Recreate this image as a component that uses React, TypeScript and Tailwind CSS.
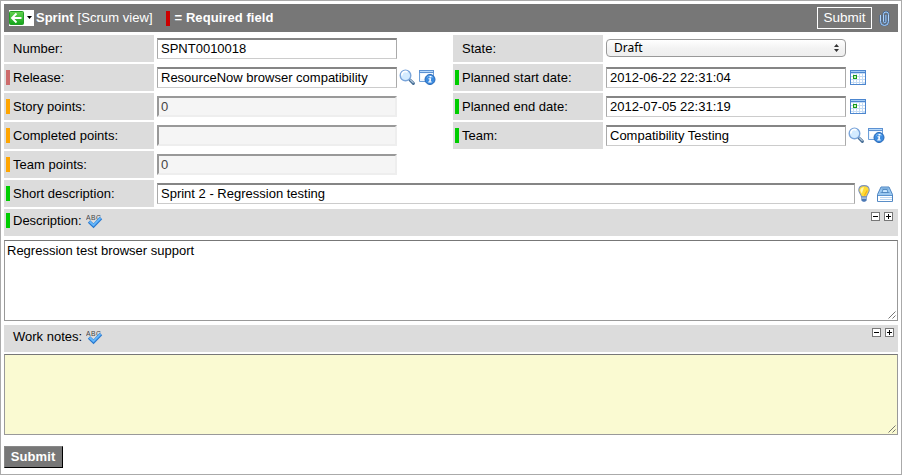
import React from "react";

const markers = {
  none: "bg-transparent",
  red: "bg-[#cd6b6b]",
  orange: "bg-[#ffa500]",
  green: "bg-[#00cd00]",
};
type Marker = keyof typeof markers;

function Label({ text, marker = "none" }: { text: string; marker?: Marker }) {
  return (
    <div className="flex h-[27px] w-[150px] shrink-0 items-center bg-[#dcdcdc] pl-[2px]">
      <span className={`h-[15px] w-1 ${markers[marker]}`} />
      <span className="ml-[3px] whitespace-nowrap leading-[15px] tracking-[0.02px]">{text}</span>
    </div>
  );
}

function Field({ value, readOnly = false, wide = false }: { value: string; readOnly?: boolean; wide?: boolean }) {
  const look = readOnly
    ? "border-2 border-t-[#999] border-l-[#999] border-r-[#eee] border-b-[#eee] bg-[#f5f5f5] pl-[2px] text-[#444]"
    : "border border-t-2 border-t-[#858585] border-l-[#aaa] border-r-[#aaa] border-b-[#ccc] bg-white pb-[2px] pl-[3px] text-black";
  return (
    <div className={`ml-[3px] flex h-[21px] shrink-0 items-center ${wide ? "w-[698px]" : "w-[240px]"} ${look}`}>
      <span className="whitespace-nowrap leading-[15px]">{value}</span>
    </div>
  );
}

function SearchIcon() {
  return (
    <svg className="ml-[2px] mb-[1px] shrink-0" width="17" height="17" viewBox="0 0 17 17">
      <path d="M11 11L14.400 14.400" stroke="#466d95" strokeWidth="3" strokeLinecap="round" />
      <path d="M11.500 11L14.200 13.700" stroke="#b4c9dc" strokeWidth="1.200" strokeLinecap="round" />
      <circle cx="6.500" cy="6.500" r="5.300" fill="#d3ebff" stroke="#7aa5da" strokeWidth="1.400" />
      <path d="M3 6.500A3.400 3.400 0 0 1 8.500 3.200" fill="none" stroke="#fff" strokeWidth="1.600" />
    </svg>
  );
}

function InfoIcon() {
  return (
    <svg className="ml-[3px] mb-[1px] shrink-0" width="17" height="16" viewBox="0 0 17 16">
      <path d="M.5 1.500h14v11H.5z" fill="#eef6ff" stroke="#6d9fd8" />
      <path d="M0 1h15v3H0z" fill="#5c91d2" />
      <path d="M1 2h13v1H1z" fill="#b9dafa" />
      <path d="M2 5h6v5H2z" fill="#fff" />
      <circle cx="11" cy="10.500" r="5" fill="#3b8be0" stroke="#2867b5" />
      <path d="M8 8.500A3.700 3.700 0 0 1 14 8.500" fill="none" stroke="#7dbcf5" />
      <path d="M10.500 7h2v1.500h-2zM9.500 9.300h2.700l-.5 3.100h1v1H9.200v-1h1l.3-2.100h-1z" fill="#fff" />
    </svg>
  );
}

function CalendarIcon() {
  return (
    <svg className="ml-1 shrink-0" width="16" height="15" viewBox="0 0 16 15" shapeRendering="crispEdges">
      <path d="M0 0h16v15H0z" fill="#4c86cf" />
      <path d="M1 1h14v1H1z" fill="#a5cdf5" />
      <path d="M1 3h14v11H1z" fill="#c5dcf5" />
      <path d="M1 4h2v2H1zM4 4h2v2H4zM7 4h2v2H7zM10 4h2v2h-2zM13 4h2v2h-2zM1 7h2v2H1zM7 7h2v2H7zM10 7h2v2h-2zM13 7h2v2h-2zM1 10h2v2H1zM4 10h2v2H4zM7 10h2v2H7zM10 10h2v2h-2zM13 10h2v2h-2zM1 13h2v1H1zM4 13h2v1H4zM7 13h2v1H7zM10 13h2v1h-2z" fill="#fff" />
      <path d="M3 5h4v4H3z" fill="#189a1c" />
      <path d="M4 6h2v2H4z" fill="#c8f2bd" />
    </svg>
  );
}

function BulbIcon() {
  return (
    <svg className="ml-[3px] mb-[1px] shrink-0" width="12" height="17" viewBox="0 0 11 16">
      <path d="M5.500.6C2.500.6.6 2.500.6 5c0 2.200 2.200 3.500 2.500 6h4.800c.3-2.500 2.500-3.800 2.500-6C10.400 2.500 8.500.6 5.500.6z" fill="#ffdc35" stroke="#7c91bb" strokeWidth="1" />
      <path d="M5.500 2C3.500 2 2 3.300 2 5c0 1 .8 2 1.500 3z" fill="#fff7ae" />
      <path d="M6 10c.3-2 2-3 2.500-5" fill="none" stroke="#f7ae18" />
      <path d="M3 11h5v3.500L6.500 15.700h-2L3 14.500z" fill="#4c79b5" />
      <path d="M3.500 12.300h4" stroke="#dbe9fa" />
    </svg>
  );
}

function StackIcon() {
  return (
    <svg className="ml-[7px] shrink-0" width="16" height="16" viewBox="0 0 16 16">
      <path d="M4 1h8l3.500 7.500v6.900H.5V8.500z" fill="#9ac8f0" stroke="#4d84c1" />
      <path d="M4.500 3h7M3.500 6.500h9" stroke="#6398cf" />
      <path d="M6 3.500h4l1 3H5z" fill="#c7e5ff" stroke="#447db9" strokeWidth=".8" />
      <path d="M1 9h14v6H1z" fill="#fff" />
      <path d="M1 9.500h14" stroke="#5c93ce" />
      <path d="M3 11.500h12M3 13.500h12" stroke="#b9d5f1" />
    </svg>
  );
}

function SpellIcon() {
  return (
    <svg className="ml-1 mt-[5px] shrink-0" width="17" height="15" viewBox="0 0 17 15">
      <text x="0" y="6" fontFamily="Liberation Sans, sans-serif" fontSize="6.800" textLength="15" fill="#444">ABC</text>
      <path d="M3 7.500L7.500 11.800L15 4" fill="none" stroke="#2878cf" strokeWidth="3.300" />
      <path d="M3.500 7.500L7.500 11.200L14.500 4" fill="none" stroke="#65b7fb" strokeWidth="1.800" />
    </svg>
  );
}

function BoxIcon({ plus = false }: { plus?: boolean }) {
  return (
    <svg width="9" height="9" viewBox="0 0 9 9" shapeRendering="crispEdges">
      <path d="M.5.5h8v8h-8z" fill="#fff" stroke="#777" />
      <path d={plus ? "M2 4h5v1H2zM4 2h1v5H4z" : "M2 4h5v1H2z"} fill="#000" />
    </svg>
  );
}

function SectionBar({ text, marker = "none", nudge }: { text: string; marker?: Marker; nudge: string }) {
  return (
    <div className="flex h-[27px] items-start bg-[#dcdcdc] pl-[2px]">
      <span className={`mt-1 h-[15px] w-1 ${markers[marker]}`} />
      <span className="ml-[3px] mt-1 whitespace-nowrap leading-[15px]">{text}</span>
      <SpellIcon />
      <div className={`ml-auto mt-[3px] flex gap-1 ${nudge}`}>
        <BoxIcon />
        <BoxIcon plus />
      </div>
    </div>
  );
}

function TextBox({ text, color }: { text: string; color: string }) {
  return (
    <div className={`flex h-[81px] justify-between border border-[#999] border-t-[#777] pl-[2px] pt-[2px] ${color}`}>
      <span className="leading-[15px]">{text}</span>
      <svg className="mt-auto mr-[1px] mb-[1px]" width="8" height="8" viewBox="0 0 8 8">
        <path d="M.5 7.500l7-7M4.500 7.500l3-3" stroke="#666" strokeWidth=".9" />
      </svg>
    </div>
  );
}

export default function App() {
  return (
    <div className="h-[475px] w-[902px] border border-[#aaa] bg-white p-[3px] font-['Liberation_Sans',Arial,sans-serif] text-[13px] text-black">
      <header className="flex h-7 items-center bg-[#777] pl-[5px] text-white">
        <div className="mb-[1px] flex h-4 w-[25px] items-center bg-white">
          <svg width="25" height="16" viewBox="0 0 25 16">
            <defs>
              <linearGradient id="go" x2="0" y2="1">
                <stop stopColor="#65d34f" />
                <stop offset="1" stopColor="#12a51b" />
              </linearGradient>
            </defs>
            <rect x=".5" y="1.500" width="14" height="13" rx="1" fill="url(#go)" stroke="#249d26" />
            <path d="M12.500 8H4M7.500 3.500L3 8L7.500 12.500" fill="none" stroke="#fff" strokeWidth="1.900" />
            <path d="M18 6h5l-2.500 3z" fill="#000" />
          </svg>
        </div>
        <b className="ml-[2px]">Sprint</b>
        <span className="ml-1 tracking-[0.05px]">[Scrum view]</span>
        <span className="ml-[13px] h-[15px] w-1 bg-[#cc0000]" />
        <b className="ml-[5px] tracking-[0.06px]">= Required field</b>
        <button className="ml-auto h-[22px] w-[55px] border border-white text-[13.500px] leading-5">Submit</button>
        <svg className="ml-[7px] mr-[8px]" width="11" height="15" viewBox="0 0 11 15">
          <path d="M1.500 4v6.500a4 4 0 0 0 8 0V3.500a2.500 2.500 0 0 0-5 0v7a1.200 1.200 0 0 0 2.400 0V4" fill="none" stroke="#3b6397" strokeWidth="1.900" />
          <path d="M1.500 4v6.500a4 4 0 0 0 8 0V3.500a2.500 2.500 0 0 0-5 0v7a1.200 1.200 0 0 0 2.400 0V4" fill="none" stroke="#add5ff" strokeWidth="1" />
        </svg>
      </header>

      <div className="mt-[3px] flex">
        <div className="flex w-[449px] flex-col gap-[2px]">
          <div className="flex items-center"><Label text="Number:" /><Field value="SPNT0010018" /></div>
          <div className="flex items-center"><Label text="Release:" marker="red" /><Field value="ResourceNow browser compatibility" /><SearchIcon /><InfoIcon /></div>
          <div className="flex items-center"><Label text="Story points:" marker="orange" /><Field value="0" readOnly /></div>
          <div className="flex items-center"><Label text="Completed points:" marker="orange" /><Field value="" readOnly /></div>
          <div className="flex items-center"><Label text="Team points:" marker="orange" /><Field value="0" readOnly /></div>
        </div>
        <div className="flex flex-col gap-[2px]">
          <div className="flex items-center">
            <Label text="State:" />
            <div className="ml-[3px] mb-[1px] flex h-[18px] w-[240px] items-center justify-between rounded border border-[#999] bg-linear-to-b from-white via-[#f3f3f3] to-[#efefef] pr-[6px] pl-[7px] font-['Noto_Sans',sans-serif] text-xs leading-4">
              <span>Draft</span>
              <svg width="5" height="8" viewBox="0 0 5 8"><path d="M0 3L2.500 0L5 3zM0 5h5L2.500 8z" fill="#333" /></svg>
            </div>
          </div>
          <div className="flex items-center"><Label text="Planned start date:" marker="green" /><Field value="2012-06-22 22:31:04" /><CalendarIcon /></div>
          <div className="flex items-center"><Label text="Planned end date:" marker="green" /><Field value="2012-07-05 22:31:19" /><CalendarIcon /></div>
          <div className="flex items-center"><Label text="Team:" marker="green" /><Field value="Compatibility Testing" /><SearchIcon /><InfoIcon /></div>
        </div>
      </div>

      <div className="mt-[2px] mb-[2px] flex items-center">
        <Label text="Short description:" marker="green" />
        <Field value="Sprint 2 - Regression testing" wide />
        <BulbIcon />
        <StackIcon />
      </div>
      <SectionBar text="Description:" marker="green" nudge="mr-[5px]" />
      <div className="mt-1"><TextBox text="Regression test browser support" color="bg-white" /></div>
      <div className="mt-1"><SectionBar text="Work notes:" nudge="mr-1" /></div>
      <div className="mt-[2px]"><TextBox text="" color="bg-[#fafad2]" /></div>
      <button className="mt-[11px] block h-[22px] w-[59px] border border-t-[#888] border-l-[#888] border-r-black border-b-black bg-[#777] pr-[1px] text-[13px] leading-5 font-bold tracking-[0.1px] text-white">Submit</button>
    </div>
  );
}
